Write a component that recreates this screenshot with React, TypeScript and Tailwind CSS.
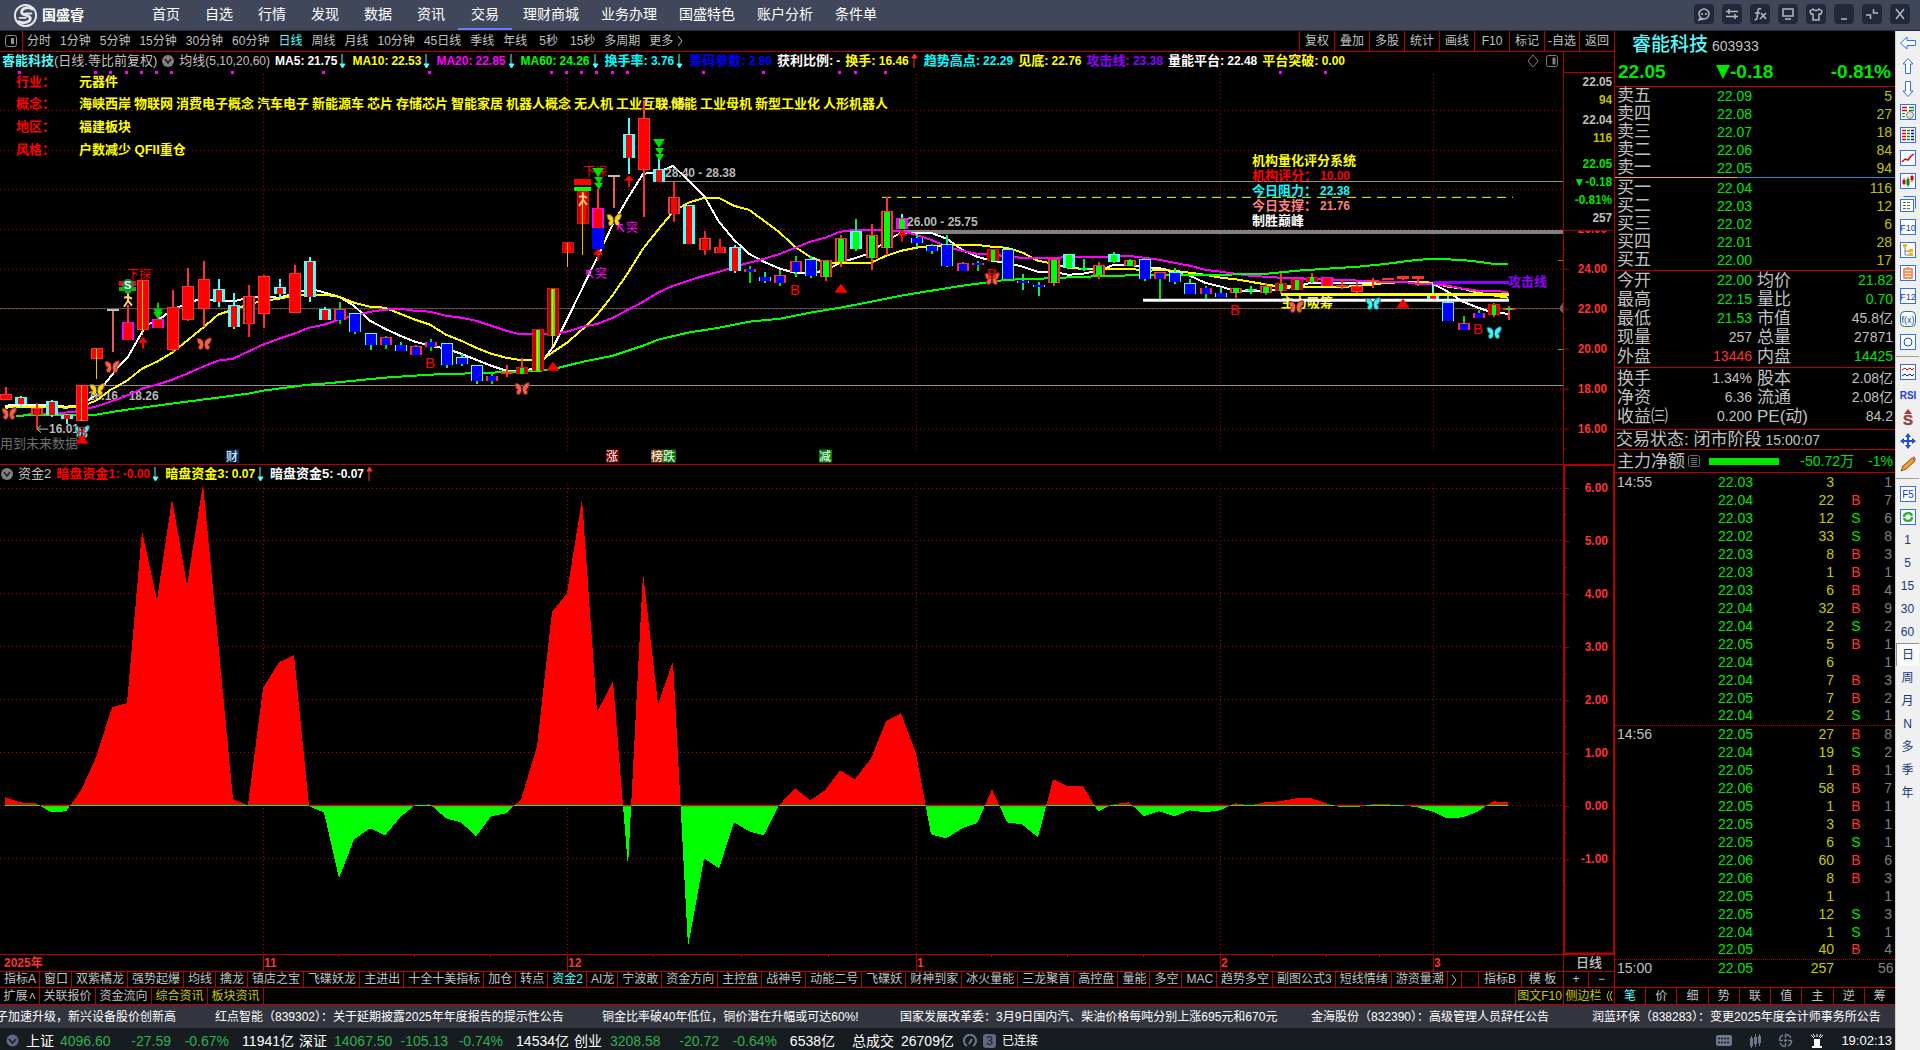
import React from "react";

const RED = "#b40000";
const BRED = "#ff3232";
const CYAN = "#54fcfc";

/* ---------- chart data ---------- */

const barX = (i: number) => Math.round(5.3 + 15.18 * i);

const months = [263, 567, 916, 1220, 1433];

type Candle = [number, number, number, number, string];
// [wickTop, wickBottom, bodyTop, bodyBottom, style]
const candles: Candle[] = [
  [387, 400, 394, 400, "R"], [396, 407, 397, 404, "C"], [403, 429, 408, 415, "H"], [400, 417, 401, 415, "C"],
  [414, 424, 415, 419, "C"], [385, 421, 385, 421, "Y"], [348, 379, 348, 359, "Y"], [309, 352, 309, 311, "T"],
  [305, 340, 322, 340, "MR"], [280, 335, 280, 330, "Y"], [318, 328, 319, 328, "MR"], [290, 352, 307, 350, "R"],
  [268, 321, 286, 320, "R"], [261, 327, 279, 309, "R"], [279, 307, 289, 302, "C"], [293, 329, 305, 327, "C"],
  [285, 337, 296, 324, "H"], [275, 328, 276, 314, "R"], [279, 298, 287, 294, "C"], [265, 313, 273, 313, "R"],
  [257, 302, 261, 297, "C"], [307, 320, 309, 320, "C"], [302, 324, 309, 320, "RB"], [313, 334, 313, 332, "CB"],
  [333, 350, 333, 345, "CB"], [336, 349, 337, 345, "RB"], [342, 351, 345, 351, "CB"], [345, 355, 346, 355, "RB"],
  [339, 351, 342, 347, "RB"], [343, 368, 343, 365, "CB"], [354, 366, 357, 364, "CB"], [365, 384, 365, 381, "CB"],
  [374, 384, 376, 381, "RB"], [365, 377, 372, 374, "R"], [358, 374, 367, 374, "DG"], [329, 371, 329, 371, "DY"],
  [288, 347, 288, 336, "DY"], [242, 267, 242, 253, "DR"], [191, 255, 191, 224, "DR"], [189, 249, 208, 228, "MR"],
  [175, 208, 175, 177, "T"], [118, 174, 134, 158, "C"], [100, 217, 118, 170, "R"], [155, 182, 169, 182, "C"],
  [182, 222, 197, 214, "H"], [205, 244, 205, 244, "C"], [231, 255, 238, 250, "H"], [239, 253, 247, 253, "H"],
  [245, 273, 247, 271, "C"], [266, 283, 269, 272, "RB"], [272, 283, 277, 281, "CB"], [270, 286, 275, 283, "RB"],
  [256, 277, 261, 272, "RB"], [256, 278, 259, 276, "CB"], [260, 281, 260, 277, "RG"], [235, 267, 238, 262, "RG"],
  [219, 251, 231, 249, "CG"], [224, 270, 235, 258, "RG"], [197, 255, 211, 248, "RG"], [214, 229, 218, 229, "MG"],
  [234, 247, 238, 243, "CB"], [244, 254, 246, 251, "CB"], [235, 267, 244, 266, "CB"], [262, 271, 263, 271, "RB"],
  [261, 271, 263, 265, "RB"], [249, 261, 249, 261, "DG"], [249, 279, 249, 279, "CB"], [274, 290, 281, 283, "CB"],
  [282, 296, 285, 287, "CB"], [259, 286, 259, 283, "RG"], [254, 269, 254, 268, "CG"], [259, 271, 268, 270, "CG"],
  [262, 279, 265, 275, "RG"], [252, 263, 254, 262, "CG"], [259, 266, 260, 266, "RG"], [259, 281, 259, 279, "CB"],
  [272, 300, 272, 279, "RB"], [268, 284, 272, 282, "CB"], [279, 294, 283, 294, "CB"], [286, 299, 288, 294, "RB"],
  [287, 297, 293, 297, "CB"], [288, 298, 288, 293, "RG"], [286, 294, 289, 291, "CG"], [283, 295, 286, 293, "RG"],
  [273, 294, 283, 291, "DG"], [279, 290, 279, 290, "DG"], [273, 283, 277, 282, "DG"], [277, 286, 277, 286, "MR"],
  [280, 289, 285, 287, "R"], [280, 293, 286, 292, "R"], [278, 288, 280, 282, "R"], [278, 280, 278, 280, "R"],
  [276, 280, 276, 279, "R"], [276, 286, 276, 279, "R"], [283, 299, 295, 299, "C"], [295, 321, 302, 321, "CB"],
  [316, 330, 323, 330, "RB"], [310, 318, 313, 318, "RB"], [303, 317, 304, 315, "DG"], [306, 320, 308, 310, "RG"],
];

type Look = { fill: string; edge: string; inner: string; w: number; wick: string };
const looks: Record<string, Look> = {
  R: { fill: "#ff0000", edge: BRED, inner: "", w: 0, wick: BRED },
  Y: { fill: "#ff0000", edge: BRED, inner: "#ffe000", w: 1, wick: "#ffc000" },
  C: { fill: CYAN, edge: CYAN, inner: "#ff0000", w: 6, wick: CYAN },
  H: { fill: "#000000", edge: BRED, inner: "#ff0000", w: 6, wick: "#ff2020" },
  RB: { fill: BRED, edge: BRED, inner: "#0000ff", w: 8, wick: "#00e000" },
  CB: { fill: CYAN, edge: CYAN, inner: "#0000ff", w: 10, wick: "#00f060" },
  RG: { fill: "#000000", edge: BRED, inner: "#00ff00", w: 6, wick: BRED },
  CG: { fill: CYAN, edge: CYAN, inner: "#00ff00", w: 6, wick: "#00f060" },
  MG: { fill: "#ff00ff", edge: "#ff00ff", inner: "#00ff00", w: 6, wick: CYAN },
  MR: { fill: "#ff00ff", edge: "#ff00ff", inner: "#ff0000", w: 8, wick: BRED },
  DR: { fill: "#c00000", edge: "#e01010", inner: "#ff0000", w: 6, wick: "#ffb000" },
  DG: { fill: "#c00000", edge: "#e01010", inner: "#00ff00", w: 4, wick: BRED },
  DY: { fill: "#b40000", edge: "#e01010", inner: "#40f000", w: 4, wick: "#ffe000" },
  T: { fill: "#ff2020", edge: "#c0c0c0", inner: "", w: 0, wick: "#e06060" },
};

const flow = [
  797, 802, 803, 812, 811, 790, 757, 707, 703, 531, 600, 499, 585, 484, 641, 799, 805, 688, 662, 655, 806, 812, 878, 839,
  828, 835, 817, 805, 804, 818, 822, 836, 816, 813, 799, 746, 612, 593, 499, 712, 681, 867, 573, 704, 661, 946, 858, 868,
  822, 831, 835, 805, 788, 800, 790, 770, 779, 758, 721, 713, 753, 834, 838, 828, 823, 789, 822, 824, 837, 779, 786, 786,
  811, 804, 802, 816, 811, 816, 810, 812, 810, 803, 805, 802, 801, 798, 798, 803, 807, 807, 804, 804, 805, 807, 811, 818,
  817, 811, 801, 802,
];

const ma5 =
  "5,406 36,405 66,407 81,406 96,395 105,384 121,364 128,357 143,331 148,325 163,317 172,310 187,304 200,299 218,301 236,301 248,298 264,297 279,298 294,294 309,289 318,291 339,297 354,306 370,321 385,329 400,336 415,342 430,346 446,349 461,354 476,360 491,366 506,371 521,372 537,368 545,358 554,346 567,320 583,287 598,256 613,224 628,198 643,174 658,172 666,169 673,166 688,180 704,196 719,222 734,240 749,254 764,262 780,269 795,273 810,273 825,271 840,263 856,258 871,253 886,241 901,233 931,233 947,239 962,250 977,257 992,261 1007,263 1023,267 1038,272 1053,272 1068,275 1083,274 1098,271 1114,265 1129,265 1144,267 1164,269 1174,273 1190,276 1205,283 1221,287 1235,291 1266,291 1281,289 1296,287 1311,283 1372,283 1387,282 1417,282 1433,284 1448,292 1463,302 1478,308 1493,313 1508,314";
const ma10 =
  "5,408 36,407 66,408 81,407 96,401 111,390 127,381 142,369 157,362 172,353 187,341 203,328 218,315 233,310 248,305 263,301 279,299 294,296 309,295 324,295 339,297 354,303 370,307 385,308 400,314 415,320 430,325 446,335 461,341 476,348 491,354 506,358 518,360 534,360 545,358 552,353 567,343 583,329 598,314 613,295 628,273 643,249 658,230 673,212 688,203 704,198 719,198 734,206 749,210 764,221 780,233 795,247 810,257 825,263 871,263 886,256 901,251 916,248 931,246 947,246 962,245 977,245 992,247 1007,248 1023,253 1038,261 1053,264 1068,268 1083,269 1129,269 1149,271 1159,270 1174,271 1190,273 1205,275 1221,278 1239,280 1256,283 1274,286 1311,287 1346,287 1372,285 1387,283 1417,282 1433,283 1448,287 1463,289 1478,293 1508,298";
const ma20 =
  "28,414 54,414 75,412 96,407 111,402 127,396 142,389 157,385 172,380 187,374 203,367 218,361 233,359 248,352 263,345 279,339 294,334 309,328 324,325 339,320 354,316 370,312 385,310 400,309 415,311 430,312 446,316 461,318 476,321 491,326 506,331 518,334 552,334 567,332 583,327 598,324 613,318 628,310 643,302 658,293 673,286 688,281 704,276 719,272 734,267 749,263 764,259 780,254 795,248 810,242 825,238 840,232 856,230 901,231 916,235 931,240 947,247 962,251 977,254 992,254 1007,257 1023,258 1053,258 1080,257 1114,257 1129,256 1144,258 1159,260 1174,263 1190,266 1205,270 1221,272 1250,276 1281,278 1311,279 1341,280 1381,282 1402,282 1417,284 1433,284 1448,286 1463,289 1478,291 1508,292";
const ma60 =
  "16,416 96,415 127,410 157,406 187,402 218,398 248,394 263,391 309,385 324,384 385,378 430,375 461,374 491,373 541,371 559,368 583,362 613,356 643,346 658,340 688,333 719,328 749,322 780,319 810,313 840,308 871,302 901,296 931,291 962,286 992,282 1007,280 1038,279 1083,277 1114,276 1159,275 1221,275 1266,274 1296,271 1326,269 1357,267 1387,264 1417,260 1440,259 1471,261 1493,264 1508,264";

const concepts: [number, string][] = [
  [79, "海峡西岸"], [134, "物联网"], [176, "消费电子概念"], [257, "汽车电子"], [312, "新能源车"], [367, "芯片"], [396, "存储芯片"],
  [451, "智能家居"], [506, "机器人概念"], [574, "无人机"], [616, "工业互联"], [671, "储能"], [700, "工业母机"], [755, "新型工业化"], [823, "人形机器人"],
];

/* ---------- chart marks ---------- */

const CJK = '"Liberation Sans","Noto Sans CJK SC",sans-serif';

function Label({ x, y, fill, size = 13, bold = true, end = false, children }: { x: number; y: number; fill: string; size?: number; bold?: boolean; end?: boolean; children: React.ReactNode }) {
  return (
    <text x={x} y={y} fill={fill} fontSize={size} fontWeight={bold ? 700 : 400} fontFamily={CJK} textAnchor={end ? "end" : "start"} dominantBaseline="central">
      {children}
    </text>
  );
}

function Butterfly({ x, y, c, d }: { x: number; y: number; c: string; d: string }) {
  return (
    <g transform={`translate(${x} ${y})`}>
      <path d="M0 0C-1-4-4-6-7-5C-7-2-6 0-4 1C-6 2-6 5-4 6C-2 6-1 4 0 2C1 4 2 6 4 6C6 5 6 2 4 1C6 0 8-3 7-6C4-6 1-4 0 0Z" fill={c} stroke={d} strokeWidth="1" />
      <path d="M0-2V4" stroke="#000" strokeWidth="1" />
    </g>
  );
}

const UpArrow = ({ x, y }: { x: number; y: number }) => (
  <path d={`M${x} ${y - 6}l5 6h-4v6h-2v-6h-4z`} fill="#ff0000" />
);
const Peak = ({ x, y }: { x: number; y: number }) => <path d={`M${x} ${y - 5}l6 8v1h-12v-1z`} fill="#ff0000" />;
const Fall = ({ x, y }: { x: number; y: number }) => (
  <path d={`M${x - 6} ${y}h12l-6 9zM${x - 4} ${y + 9}h9l-4 7zM${x - 4} ${y + 15}h9l-4 7z`} fill="#00e000" />
);
const Runner = ({ x, y }: { x: number; y: number }) => (
  <path d={`M${x} ${y - 6}v3l-4 1M${x} ${y - 3}l4 2M${x} ${y - 3}v4l-4 6M${x} ${y + 1}l4 5`} stroke="#ffd070" strokeWidth="2" fill="none" />
);

function Tag({ x, bg, t }: { x: number; bg: string; t: string }) {
  return (
    <g>
      <rect x={x} y="450" width="13" height="13" fill={bg} />
      <Label x={x} y={457} fill="#fff" size={12} bold={false}>{t}</Label>
    </g>
  );
}

function Grid({ rows, top, bottom }: { rows: number[]; top: number; bottom: number }) {
  return (
    <g stroke={RED} strokeDasharray="1 3" shapeRendering="crispEdges">
      {rows.map((y) => (
        <line key={y} x1="0" x2="1563" y1={y + 0.5} y2={y + 0.5} />
      ))}
      {months.map((x) => (
        <line key={x} x1={x + 0.5} x2={x + 0.5} y1={top} y2={bottom} />
      ))}
    </g>
  );
}

function PriceChart() {
  return (
    <svg className="block size-full" viewBox="0 70 1563 394" preserveAspectRatio="none" role="img" aria-label="日线K线图">
      <Grid rows={[110, 150, 189, 229, 269, 309, 349, 389, 429]} top={74} bottom={451} />
      <g shapeRendering="crispEdges">
        {[19, 95, 110, 126, 141, 156, 171, 232, 323, 429, 551, 566, 581, 596, 612, 627, 703, 763, 839, 855, 885, 1280, 1325].map((x) => (
          <rect key={x} x={x - 1} y="71" width="3" height="3" fill="#ff00ff" />
        ))}
        <rect x="0" y="308" width="1563" height="1" fill="#505050" />
        <rect x="81" y="385" width="1482" height="1" fill="#909090" />
        <rect x="663" y="181" width="900" height="1" fill="#909090" />
        <rect x="904" y="230" width="659" height="4" fill="#808080" />
        <line x1="882" x2="1513" y1="197.5" y2="197.5" stroke="#ffff00" strokeDasharray="9 6" />
        <path d="M1563 303v11l-4-5z" fill="#606060" />
        <rect x="1558" y="260" width="5" height="1" fill={BRED} />
        <rect x="1558" y="349" width="5" height="1" fill="#00e000" />
      </g>
      <Label x={655} y={104} fill="#b8b8b8" size={12}>32.65</Label>
      <Label x={16} y={82} fill="#ff0000">行业：</Label>
      <Label x={79} y={82} fill="#ffff00">元器件</Label>
      <Label x={16} y={104} fill="#ff0000">概念：</Label>
      {concepts.map(([x, t]) => <Label key={x} x={x} y={104} fill="#ffff00">{t}</Label>)}
      <Label x={16} y={127} fill="#ff0000">地区：</Label>
      <Label x={79} y={127} fill="#ffff00">福建板块</Label>
      <Label x={16} y={150} fill="#ff0000">风格：</Label>
      <Label x={79} y={150} fill="#ffff00">户数减少 QFII重仓</Label>
      <Label x={0} y={444} fill="#707070" bold={false}>用到未来数据</Label>
      <Label x={88} y={396} fill="#b8b8b8" size={12}>18.16 - 18.26</Label>
      <Label x={49} y={429} fill="#b8b8b8" size={12}>16.01</Label>
      <path d="M48 429.500H37M41 426L37 429.500L41 433" stroke="#c0c0c0" fill="none" />
      <path d="M654 101.500H644M647 99L644 101.500L647 104" stroke="#c0c0c0" fill="none" />
      <g fill="none" strokeWidth="2" shapeRendering="crispEdges">
        <polyline points={ma5} stroke="#ffffff" />
        <polyline points={ma10} stroke="#ffff00" />
        <polyline points={ma20} stroke="#ff00ff" />
        <polyline points={ma60} stroke="#00ff00" />
      </g>
      <g shapeRendering="crispEdges">
        {candles.map(([wt, wb, bt, bb, s], i) => {
          const k = looks[s];
          const x = barX(i);
          const h = Math.max(bb - bt, 2);
          const hollow = k.fill === "#000000";
          return (
            <g key={i}>
              <rect x={x} y={wt} width={s.includes("Y") || s === "DR" ? 1 : 2} height={wb - wt} fill={k.wick} />
              <rect x={x - 5} y={bt} width="12" height={h} fill={k.edge} />
              {h > 4 && <rect x={x - (hollow ? 3 : 4)} y={bt + 1} width={hollow ? 8 : 10} height={h - 2} fill={k.fill} />}
              {k.w > 1 && <rect x={x + 1 - k.w / 2} y={bt + (h > 6 ? 1 : 0)} width={k.w} height={h > 6 ? h - 1 : h} fill={k.inner} />}
              {(s === "Y" || s === "DY" || s === "DR") && <rect x={x} y={bt + 1} width="1" height={h - 1} fill="#ffd000" />}
            </g>
          );
        })}
        <rect x="592" y="228" width="12" height="21" fill="#0000ff" />
        <rect x="574" y="179" width="17" height="6" fill="#ff0000" />
        <rect x="574" y="187" width="17" height="4" fill="#00ff00" />
        <rect x="119" y="281" width="17" height="5" fill="#ff0000" />
        <rect x="119" y="287" width="17" height="4" fill="#00c000" />
        <rect x="1281" y="293" width="228" height="3" fill="#ffff00" />
        <rect x="1433" y="281" width="76" height="3" fill="#9000ff" />
      </g>
      <Label x={1281} y={303} fill="#ffff00">主力吸筹</Label>
      <rect x="1143" y="299" width="366" height="3" fill="#ffffff" />
      <Label x={1508} y={282} fill="#9000ff">攻击线</Label>

      <Label x={127} y={275} fill="#ff0000" size={12} bold={false}>下探</Label>
      <Label x={583} y={172} fill="#ff0000" size={12} bold={false}>下探</Label>
      <circle cx="128" cy="285" r="6" fill="#208040" />
      <Label x={124} y={285} fill="#fff" size={11}>S</Label>
      <path d="M124 291h8l-4 5z" fill="#00c000" />
      <Runner x={128} y={300} />
      <Runner x={583} y={199} />
      <Label x={665} y={173} fill="#b8b8b8" size={12}>28.40 - 28.38</Label>
      <Label x={907} y={222} fill="#b8b8b8" size={12}>26.00 - 25.75</Label>
      {[[621, 228], [590, 274]].map(([x, y]) => (
        <g key={x}>
          <path d={`M${x + 3} ${y + 4}L${x - 2} ${y - 2}M${x - 3} ${y + 2}V${y - 3}H${x + 2}`} stroke="#ff00ff" strokeWidth="1.500" fill="none" />
          <Label x={x + 5} y={y} fill="#ff00ff" size={12} bold={false}>突</Label>
        </g>
      ))}
      {[[143, 343], [598, 255], [629, 181], [902, 236]].map(([x, y]) => <UpArrow key={x} x={x} y={y} />)}
      {[[553, 367], [82, 440], [841, 289], [1403, 304]].map(([x, y]) => <Peak key={x} x={x} y={y} />)}
      <path d="M157 303h2v6h4l-2 3h2l-5 8l-5-8h2l-2-3h4z" fill="#00d000" />
      <Fall x={659} y={139} />
      <Fall x={598} y={168} />
      {[[9, 414], [112, 367], [204, 344], [522, 389], [992, 279], [1296, 307]].map(([x, y]) => <Butterfly key={x} x={x} y={y} c="#f06048" d="#802018" />)}
      {[[97, 390], [614, 220]].map(([x, y]) => <Butterfly key={x} x={x} y={y} c="#f8d020" d="#806010" />)}
      {[[82, 432], [1373, 304], [1494, 333]].map(([x, y]) => <Butterfly key={x} x={x} y={y} c="#40f0f0" d="#107080" />)}
      {[[77, 432], [425, 363], [790, 290], [987, 274], [1230, 310], [1473, 329]].map(([x, y]) => (
        <Label key={x} x={x} y={y} fill="#ff0000" size={15} bold={false}>B</Label>
      ))}
      <Label x={1252} y={161} fill="#ffff00">机构量化评分系统</Label>
      <Label x={1252} y={176} fill="#ff0000">机构评分：</Label>
      <Label x={1350} y={176} fill="#ff0000" size={12} end>10.00</Label>
      <Label x={1252} y={191} fill="#00ffff">今日阻力：</Label>
      <Label x={1350} y={191} fill="#00ffff" size={12} end>22.38</Label>
      <Label x={1252} y={206} fill="#ff8080">今日支撑：</Label>
      <Label x={1350} y={206} fill="#ff8080" size={12} end>21.76</Label>
      <Label x={1252} y={221} fill="#ffffff">制胜巅峰</Label>
      <Tag x={226} bg="#003468" t="财" />
      <Tag x={606} bg="#800000" t="涨" />
      <Tag x={651} bg="#804000" t="榜" />
      <Tag x={663} bg="#008000" t="跌" />
      <Tag x={819} bg="#008000" t="减" />
    </svg>
  );
}

function FlowChart() {
  const pts = flow.map((y, i) => `${barX(i)},${y}`).join(" ");
  const shape = `${barX(0)},805 ${pts} ${barX(99)},805`;
  return (
    <svg className="block size-full" viewBox="0 483 1563 471" preserveAspectRatio="none" role="img" aria-label="资金2">
      <defs>
        <clipPath id="above"><rect x="0" y="483" width="1563" height="323" /></clipPath>
        <clipPath id="below"><rect x="0" y="805" width="1563" height="149" /></clipPath>
      </defs>
      <Grid rows={[488, 540, 593, 646, 699, 752, 805, 858]} top={484} bottom={954} />
      <g shapeRendering="crispEdges">
        <rect x="5" y="805" width="1503" height="1" fill="#00ff00" />
        <polygon points={shape} fill="#00ff00" clipPath="url(#below)" />
        <polygon points={shape} fill="#ff0000" clipPath="url(#above)" transform="translate(0 0)" />
      </g>
    </svg>
  );
}

function PriceAxis() {
  const quote: [string, number, string][] = [
    ["22.05", 82, "#c0c0c0"], ["94", 100, "#c0c000"], ["22.04", 120, "#c0c0c0"], ["116", 138, "#c0c000"],
    ["22.05", 164, "#00e600"], ["▼-0.18", 182, "#00e600"], ["-0.81%", 200, "#00e600"], ["257", 218, "#c0c0c0"],
  ];
  return (
    <svg className="block size-full" viewBox="1563 52 52 412" preserveAspectRatio="none">
      <g fill={RED}>
        <rect x="1563" y="52" width="1" height="412" />
        {[229, 269, 309, 349, 389, 429].map((y) => <rect key={y} x="1564" y={y} width="5" height="1" />)}
        {[249, 289, 329, 369, 409, 449].map((y) => <rect key={y} x="1564" y={y} width="2" height="1" />)}
      </g>
      {[24, 22, 20, 18, 16].map((v, i) => (
        <Label key={v} x={1608} y={269 + i * 40} fill={BRED} size={12} end>{v}.00</Label>
      ))}
      <Label x={1608} y={229} fill={BRED} size={12} end>26.00</Label>
      <rect x="1564" y="72" width="50" height="159" fill="#000" />
      <rect x="1563" y="72" width="51" height="1" fill={RED} />
      <rect x="1563" y="230" width="51" height="1" fill={RED} />
      {quote.map(([t, y, c]) => <Label key={y} x={1613} y={y} fill={c} size={12} end>{t}</Label>)}
    </svg>
  );
}

function FlowAxis() {
  return (
    <svg className="block size-full" viewBox="1563 465 52 489" preserveAspectRatio="none">
      <rect x="1564" y="465" width="50" height="488" fill="none" stroke={RED} strokeWidth="2" />
      {[6, 5, 4, 3, 2, 1, 0, -1].map((v, i) => (
        <g key={v}>
          <rect x="1565" y={488 + i * 53} width="4" height="1" fill={RED} />
          <rect x="1565" y={514 + i * 53} width="2" height="1" fill={RED} />
          <Label x={1608} y={488 + i * 53} fill={BRED} size={12} end>{v}.00</Label>
        </g>
      ))}
    </svg>
  );
}

/* ---------- chrome ---------- */

const nav2 = ["首页", "自选", "行情", "发现", "数据", "资讯", "交易"];
const nav4 = ["理财商城", "业务办理", "国盛特色", "账户分析", "条件单"];

const windowIcons: [string, React.ReactNode][] = [
  ["消息", <g key="i"><circle cx="8" cy="8" r="5" /><path d="M4 12L3 14L7 13" /><path d="M6 7v2M10 7v2" /></g>],
  ["切换", <path key="i" d="M2 5.500H14M2 10.500H14M5 3V8M11 8V13" />],
  ["公式", <path key="i" d="M9 3C7 2 6 3 6 5L5 12C5 14 3 14 3 13M3 7H8M9 7L14 13M14 7L8 13" />],
  ["屏幕", <path key="i" d="M3 3H13V10H3ZM5 13H11" />],
  ["皮肤", <path key="i" d="M5 3L2 5L3 8H5V14H11V8H13L14 5L11 3C10 5 6 5 5 3Z" />],
  ["最小化", <path key="i" d="M5 13H11" />],
  ["还原", <path key="i" d="M9.500 3V7H14M2 9H6.500V13" />],
  ["关闭", <path key="i" d="M4 3L12 13M12 3L4 13" />],
];

function TitleBar() {
  return (
    <header className="flex h-[31px] shrink-0 items-stretch border-b border-[#22283a] bg-[#40475a] text-sm text-white">
      <div className="flex w-[140px] shrink-0 items-center gap-1 pl-[13px]">
        <svg width="25" height="25" viewBox="0 0 26 26" fill="none" stroke="#e4e6ea" strokeWidth="3">
          <circle cx="13" cy="13" r="11" strokeWidth="2" />
          <path d="M21 7C17 3 9 5 9 9.500C9 13.500 18 11.500 18 16C18 20 10 22 5 19" />
          <path d="M20 11H12M6 15.500H14" strokeWidth="2" />
        </svg>
        <span className="font-bold">国盛睿</span>
      </div>
      <nav className="flex">
        {nav2.map((t) => (
          <button key={t} className={t === "交易" ? "border-b-2 border-[#6080f8] px-[13px]" : "pr-[13px] pb-[2px] pl-3"}>{t}</button>
        ))}
        {nav4.map((t) => (
          <button key={t} className="px-[11px] pb-[2px]">{t}</button>
        ))}
      </nav>
      <div className="ml-auto flex items-center gap-2 pr-[10px] pb-[2px]">
        {windowIcons.map(([name, icon]) => (
          <button key={name} aria-label={name} className="flex size-5 items-center justify-center rounded-[4px] bg-[#222838]">
            <svg width="16" height="16" viewBox="0 0 16 16" fill="none" stroke="#b4b8c0" strokeWidth="1.500">{icon}</svg>
          </button>
        ))}
      </div>
    </header>
  );
}

const periods = ["分时", "1分钟", "5分钟", "15分钟", "30分钟", "60分钟", "日线", "周线", "月线", "10分钟", "45日线", "季线", "年线", "5秒", "15秒", "多周期", "更多"];
const tools = ["复权", "叠加", "多股", "统计", "画线", "F10", "标记", "-自选", "返回"];

function PeriodBar() {
  return (
    <div className="flex h-[21px] shrink-0 border-r border-b border-[#b40000] text-xs text-[#c0c0c0]">
      <button aria-label="侧栏" className="flex w-[23px] items-center justify-center border-r border-[#b40000]">
        <svg width="12" height="12" viewBox="0 0 12 12"><rect x=".5" y=".5" width="11" height="11" rx="2" fill="none" stroke="#909090" /><rect x="6" y="3" width="3" height="6" fill="#909090" /></svg>
      </button>
      <div className="flex items-center gap-[9px] pl-1">
        {periods.map((t) => (
          <button key={t} className={t === "日线" ? "text-[#54fcfc]" : /^\d+秒$/.test(t) ? "pl-[3px]" : ""}>{t}</button>
        ))}
        <svg width="5" height="10" viewBox="0 0 5 10" fill="none" stroke="#c0c0c0" className="-ml-1"><path d="M0 0L4 5L0 10" /></svg>
      </div>
      <div className="ml-auto flex">
        {tools.map((t) => (
          <button key={t} className="w-[35px] border-l border-[#b40000] whitespace-nowrap">{t}</button>
        ))}
      </div>
    </div>
  );
}

function Trend({ up }: { up?: boolean }) {
  return (
    <svg width="7" height="14" viewBox="0 0 7 14" className="shrink-0">
      {up ? <path d="M3 14V1M1 4L3.500 0L6 4Z" stroke={BRED} fill={BRED} /> : <path d="M3 0V13M1 10L3.500 14L6 10Z" stroke={CYAN} fill={CYAN} />}
    </svg>
  );
}

function Chevron() {
  return (
    <svg width="12" height="12" viewBox="0 0 12 12" className="shrink-0"><circle cx="6" cy="6" r="6" fill="#808080" /><path d="M3 4L6 8L9 4" stroke="#222" strokeWidth="1.500" fill="none" /></svg>
  );
}

type Stat = [string, string, string, ("up" | "down" | "")];
function Stats({ items }: { items: Stat[] }) {
  return (
    <>
      {items.map(([name, value, color, dir]) => (
        <span key={name} className={`flex items-center whitespace-nowrap font-bold ${color}`}>
          <span className={/^[A-Z]/.test(name) ? "text-xs" : "text-[13px]"}>{name}:</span>
          <span className="ml-[3px] text-xs">{value}</span>
          {dir && <span className="ml-[2px] pr-px"><Trend up={dir === "up"} /></span>}
        </span>
      ))}
    </>
  );
}

const priceStats: Stat[] = [
  ["MA5", "21.75", "text-white", "down"], ["MA10", "22.53", "text-[#ffff00]", "down"], ["MA20", "22.85", "text-[#ff00ff]", "down"],
  ["MA60", "24.26", "text-[#00ff00]", "down"], ["换手率", "3.76", "text-[#00ffff]", "down"], ["筹码参数", "2.80", "text-[#0000ff]", ""],
  ["获利比例", "-", "text-white", ""], ["换手", "16.46", "text-[#ffff00]", "up"], ["趋势高点", "22.29", "text-[#00ffff]", ""],
  ["见底", "22.76", "text-[#ffff00]", ""], ["攻击线", "23.38", "text-[#9000ff]", ""], ["量能平台", "22.48", "text-white", ""],
  ["平台突破", "0.00", "text-[#ffff00]", ""],
];
const flowStats: Stat[] = [
  ["暗盘资金1", "-0.00", "text-[#ff0000]", "down"], ["暗盘资金3", "0.07", "text-[#ffff00]", "down"], ["暗盘资金5", "-0.07", "text-white", "up"],
];

const tabs = ["指标A", "窗口", "双紫橘龙", "强势起爆", "均线", "擒龙", "镇店之宝", "飞碟妖龙", "主进出", "十全十美指标", "加仓", "转点", "资金2", "AI龙", "宁波敢", "资金方向", "主控盘", "战神号", "动能二号", "飞碟妖", "财神到家", "冰火量能", "三龙聚首", "高控盘", "量能", "多空", "MAC", "趋势多空", "副图公式3", "短线情绪", "游资量潮"];

function MainColumn() {
  return (
    <main className="flex min-w-0 flex-1 flex-col">
      <PeriodBar />
      <section className="flex min-h-0 flex-[412_1_0px]">
        <div className="flex min-w-0 flex-1 flex-col">
          <div className="flex h-[18px] shrink-0 items-center gap-[5px] overflow-hidden pl-[2px]">
            <span className="flex items-center text-[13px] whitespace-nowrap text-[#c0c0c0]"><b className="text-[#54fcfc]">睿能科技</b>(日线.等比前复权)</span>
            <Chevron />
            <span className="flex items-center text-[13px] whitespace-nowrap text-[#c0c0c0]">均线<span className="text-xs">(5,10,20,60)</span></span>
            <Stats items={priceStats} />
            <svg className="mr-1 ml-auto shrink-0" width="32" height="14" viewBox="0 0 32 14" fill="none" stroke="#808080"><path d="M6 1L11 7L6 13L1 7Z" /><rect x="19.500" y="1.500" width="11" height="11" rx="2" /><rect x="26" y="4" width="2" height="6" fill="#808080" /></svg>
          </div>
          <div className="min-h-0 flex-1"><PriceChart /></div>
        </div>
        <div className="w-[52px] shrink-0 border-r border-[#b40000]"><PriceAxis /></div>
      </section>
      <section className="flex min-h-0 flex-[490_1_0px] border-t border-[#b40000]">
        <div className="flex min-w-0 flex-1 flex-col">
          <div className="flex h-[18px] shrink-0 items-center gap-[5px] pl-px">
            <Chevron />
            <span className="text-[13px] text-[#c0c0c0]">资金2</span>
            <Stats items={flowStats} />
          </div>
          <div className="min-h-0 flex-1"><FlowChart /></div>
        </div>
        <div className="w-[52px] shrink-0"><FlowAxis /></div>
      </section>
      <div className="flex h-[17px] shrink-0 border-t border-[#b40000]">
        <div className="min-w-0 flex-1">
          <svg className="block size-full" viewBox="0 955 1563 16" preserveAspectRatio="none">
            <g fill={RED}>
              {months.map((x) => <rect key={x} x={x} y="955" width="1" height="16" />)}
              {[338, 414, 490, 653, 741, 828, 991, 1067, 1143, 1272, 1326, 1379].map((x) => <rect key={x} x={x} y="955" width="1" height="2" />)}
            </g>
            <Label x={4} y={963} fill={BRED} size={12}>2025年</Label>
            {["11", "12", "1", "2", "3"].map((t, i) => <Label key={t} x={months[i] + 1} y={963} fill={BRED} size={12}>{t}</Label>)}
          </svg>
        </div>
        <button className="w-[52px] shrink-0 border-x border-[#b40000] text-[13px] leading-4 font-medium text-[#c0c0c0]">日线</button>
      </div>
      <div className="flex h-[17px] shrink-0 border-y border-[#b40000] text-xs leading-[15px] text-[#c0c0c0]">
        <div className="flex min-w-0 flex-1 overflow-hidden">
          {tabs.map((t) => (
            <button key={t} className={t === "资金2" ? "shrink-0 border-r border-[#b40000] pr-[3px] pl-1 text-[#54fcfc]" : "shrink-0 border-r border-[#b40000] pr-[3px] pl-1"}>{t}</button>
          ))}
          <button aria-label="更多指标" className="flex w-[14px] shrink-0 items-center justify-center border-r border-[#b40000]">
            <svg width="6" height="10" viewBox="0 0 6 10" fill="none" stroke="#c0c0c0"><path d="M1 0L5 5L1 10" /></svg>
          </button>
        </div>
        <button className="w-[43px] shrink-0 border-l border-[#b40000]">指标B</button>
        <button className="w-[42px] shrink-0 border-l border-[#b40000]">模 板</button>
        <button className="w-[25px] shrink-0 border-l border-[#b40000]">+</button>
        <button className="w-[27px] shrink-0 border-x border-[#b40000]">−</button>
      </div>
      <div className="flex h-[17px] shrink-0 border-b border-[#b40000] text-xs leading-4 text-[#c0c0c0]">
        <button className="flex w-10 items-center justify-center gap-px border-r border-[#b40000]">扩展
          <svg width="7" height="8" viewBox="0 0 7 8" fill="none" stroke="#c0c0c0"><path d="M1 7L3.500 1L6 7" /></svg>
        </button>
        {["关联报价", "资金流向"].map((t) => <button key={t} className="w-14 border-r border-[#b40000]">{t}</button>)}
        {["综合资讯", "板块资讯"].map((t) => <button key={t} className="w-14 border-r border-[#b40000] text-[#c8c800]">{t}</button>)}
        <button className="ml-auto w-12 border-l border-[#b40000] whitespace-nowrap text-[#c8c800]">图文F10</button>
        <button className="flex w-[52px] items-center justify-center gap-1 border-x border-[#b40000] whitespace-nowrap text-[#c8c800]">侧边栏
          <svg width="7" height="10" viewBox="0 0 7 10" fill="none" stroke="#c8c800"><path d="M3 0L1 5L3 10M6 0L4 5L6 10" /></svg>
        </button>
      </div>
    </main>
  );
}

/* ---------- quote panel ---------- */

const asks = [["卖五", "22.09", "5"], ["卖四", "22.08", "27"], ["卖三", "22.07", "18"], ["卖二", "22.06", "84"], ["卖一", "22.05", "94"]];
const bids = [["买一", "22.04", "116"], ["买二", "22.03", "12"], ["买三", "22.02", "6"], ["买四", "22.01", "28"], ["买五", "22.00", "17"]];
const G = "text-[#00e600]";
const S = "text-[#c0c0c0]";
const quoteA = [
  ["今开", "22.00", G, "均价", "21.82", G], ["最高", "22.15", G, "量比", "0.70", G], ["最低", "21.53", G, "市值", "45.8亿", S],
  ["现量", "257", S, "总量", "27871", S], ["外盘", "13446", "text-[#ff3232]", "内盘", "14425", G],
];
const quoteB = [["换手", "1.34%", S, "股本", "2.08亿", S], ["净资", "6.36", S, "流通", "2.08亿", S], ["收益㈢", "0.200", S, "PE(动)", "84.2", S]];
const ticks = `14:55 22.03 3 - 1
. 22.04 22 B 7
. 22.03 12 S 6
. 22.02 33 S 8
. 22.03 8 B 3
. 22.03 1 B 1
. 22.03 6 B 4
. 22.04 32 B 9
. 22.04 2 S 2
. 22.05 5 B 1
. 22.04 6 - 1
. 22.04 7 B 3
. 22.05 7 B 2
. 22.04 2 S 1
14:56 22.05 27 B 8
. 22.04 19 S 2
. 22.05 1 B 1
. 22.06 58 B 7
. 22.05 1 B 1
. 22.05 3 B 1
. 22.05 6 S 1
. 22.06 60 B 6
. 22.06 8 B 3
. 22.05 1 - 1
. 22.05 12 S 3
. 22.04 1 S 1
. 22.05 40 B 4
15:00 22.05 257 - 56`.split("\n").map((l) => l.split(" "));

function Depth({ rows }: { rows: string[][] }) {
  return (
    <table className="w-full table-fixed text-sm">
      <tbody>
        {rows.map(([n, p, q]) => (
          <tr key={n} className="h-[18px] leading-[18px]">
            <th scope="row" className="w-[72px] p-0 pl-[2px] text-left text-[17px] leading-[18px] font-normal text-[#c0c0c0]">{n}</th>
            <td className="w-[65px] p-0 text-right text-[#00e600]">{p}</td>
            <td className="p-0 pr-[3px] text-right text-[#c0c000]">{q}</td>
          </tr>
        ))}
      </tbody>
    </table>
  );
}

function Facts({ rows }: { rows: string[][] }) {
  return (
    <table className="w-full table-fixed text-sm">
      <tbody>
        {rows.map(([a, b, bc, c, d, dc]) => (
          <tr key={a} className="h-[19px] leading-[19px] whitespace-nowrap">
            <th scope="row" className="w-[72px] p-0 pl-[2px] text-left text-[17px] leading-[19px] font-normal text-[#c0c0c0]">{a}</th>
            <td className={`w-[65px] p-0 text-right ${bc}`}>{b}</td>
            <th scope="row" className="w-[55px] p-0 pl-[5px] text-left text-[17px] leading-[19px] font-normal text-[#c0c0c0]">{c}</th>
            <td className={`p-0 pr-[2px] text-right ${dc}`}>{d}</td>
          </tr>
        ))}
      </tbody>
    </table>
  );
}

function QuotePanel() {
  return (
    <aside className="flex w-[280px] shrink-0 flex-col overflow-hidden text-sm text-[#c0c0c0]">
      <div className="h-[56px] shrink-0 border-b border-[#b40000]">
        <div className="flex h-[27px] items-center gap-1 pl-[17px]">
          <h1 className="text-[19px] leading-[26px] font-medium text-[#54fcfc]">睿能科技</h1>
          <span className="pt-[2px] text-sm">603933</span>
        </div>
        <div className="flex h-[28px] items-center pr-1 pl-[3px] text-[19px] leading-7 font-bold text-[#00e600]">
          <span className="w-[98px]">22.05</span>
          <span className="flex items-center"><svg width="14" height="14" viewBox="0 0 14 14"><path d="M0 0H14L7 14Z" fill="#00e600" /></svg>-0.18</span>
          <span className="ml-auto">-0.81%</span>
        </div>
      </div>
      <Depth rows={asks} />
      <div className="flex h-px shrink-0"><div className="w-[122px] bg-[#e8b040]" /><div className="flex-1 bg-[#4080c0]" /></div>
      <div className="border-b border-[#b40000] pt-px pb-px"><Depth rows={bids} /></div>
      <div className="border-b border-[#b40000] pb-px"><Facts rows={quoteA} /></div>
      <div className="border-b border-[#b40000] pt-px pb-[3px]"><Facts rows={quoteB} /></div>
      <div className="flex h-5 shrink-0 items-center gap-1 border-b border-[#b40000] pl-px whitespace-nowrap">
        <span className="text-[17px] leading-[19px]">交易状态: 闭市阶段</span><span>15:00:07</span>
      </div>
      <div className="flex h-[23px] shrink-0 items-center border-b border-[#b40000] pr-[2px] pl-[2px] whitespace-nowrap">
        <span className="text-[17px] leading-[19px]">主力净额</span>
        <svg className="ml-[3px]" width="12" height="12" viewBox="0 0 12 12" fill="none" stroke="#707070"><rect x=".5" y=".5" width="11" height="11" rx="2" /><path d="M3 3.500H9M3 5.500H9M3 7.500H9M3 9.500H9" /></svg>
        <span className="ml-[9px] h-[7px] w-[70px] bg-[#00e600]" />
        <span className="ml-auto text-[#00e600]">-50.72万</span>
        <span className="w-[39px] text-right text-[#00e600]">-1%</span>
      </div>
      <table className="w-full table-fixed text-sm">
        <colgroup>
          <col className="w-[72px]" />
          <col className="w-[66px]" />
          <col className="w-[81px]" />
          <col className="w-[44px]" />
          <col />
        </colgroup>
        <tbody>
          {ticks.map(([t, p, v, d, n], i) => (
            <tr key={i} className={i && t !== "." ? "h-[18px] border-t border-dotted border-[#b40000] leading-[17px]" : "h-[18px] leading-[17px]"}>
              <td className="p-0 pl-[2px]">{t === "." ? "" : t}</td>
              <td className="p-0 text-right text-[#00e600]">{p}</td>
              <td className="p-0 text-right text-[#c8c800]">{v}</td>
              <td className={d === "B" ? "p-0 text-center text-[#ff3232]" : "p-0 text-center text-[#00e600]"}>{d === "-" ? "" : d}</td>
              <td className="p-0 pr-[3px] text-right text-[#808080]">{n}</td>
            </tr>
          ))}
        </tbody>
      </table>
      <nav className="mt-auto flex h-[18px] shrink-0 border-y border-[#b40000] text-xs leading-4">
        {"笔价细势联值主逆筹".split("").map((t, i) => (
          <button key={t} className={i === 0 ? "flex-1 text-[#54fcfc]" : "flex-1 border-l border-[#b40000]"}>{t}</button>
        ))}
      </nav>
    </aside>
  );
}

/* ---------- right icon rail ---------- */

const B = "#3070f0";
const frame = <rect x="1.500" y="1.500" width="15" height="15" fill="#fff" stroke={B} />;
const T = ({ s, children, c = "#1040c0" }: { s: number; children: string; c?: string }) => (
  <text x="9" y="13" fontSize={s} textAnchor="middle" fill={c} fontFamily="Liberation Sans, sans-serif">{children}</text>
);
const railTop: [string, React.ReactNode][] = [
  ["后退", <path key="a" d="M1.500 9L8 3V6.500H16.500V11.500H8V15Z" fill="#fff" stroke={B} />],
  ["上", <path key="a" d="M9 1.500L14 7H11.500V16.500H6.500V7H4Z" fill="#fff" stroke={B} />],
  ["下", <path key="a" d="M9 16.500L14 11H11.500V1.500H6.500V11H4Z" fill="#fff" stroke={B} />],
  ["自选报价", <g key="a">{frame}<path d="M3 4.500H8M3 7.500H8" stroke="#e00000" strokeWidth="1.500" /><path d="M10 4.500H15M10 7.500H15" stroke="#009000" strokeWidth="1.500" /><circle cx="11" cy="12" r="3.500" fill="#ddd" stroke="#808080" /><path d="M3 10.500H6M3 13.500H6" stroke="#009000" /></g>],
  ["报价", <g key="a">{frame}<path d="M3 4.500H7M3 7.500H7M3 10.500H7M3 13.500H7" stroke="#e00000" strokeWidth="1.500" /><path d="M8 4.500H11M8 7.500H11M8 10.500H11M8 13.500H11" stroke="#009000" strokeWidth="1.500" /><path d="M12 4.500H15M12 7.500H15M12 10.500H15M12 13.500H15" stroke="#0000d0" strokeWidth="1.500" /></g>],
  ["分时图", <g key="a">{frame}<path d="M3 13L6 10L9 11L12 7L15 5" fill="none" stroke="#e00000" strokeWidth="1.500" /></g>],
  ["K线图", <g key="a">{frame}<path d="M5 6V13M13 3V10" stroke="#e00000" /><path d="M9 5V15" stroke="#009000" /><rect x="3.500" y="8" width="3" height="4" fill="#e00000" /><rect x="7.500" y="7" width="3" height="6" fill="#009000" /><rect x="11.500" y="4" width="3" height="4" fill="#e00000" /></g>],
  ["公告", <g key="a"><path d="M4.500 1.500H16.500V13.500" fill="none" stroke={B} /><rect x="1.500" y="4.500" width="13" height="12" fill="#fff" stroke={B} /><path d="M4 7.500H12M4 10.500H12M4 13.500H12" stroke="#606060" strokeDasharray="3 1" /></g>],
  ["F10", <g key="a">{frame}<T s={9}>F10</T></g>],
  ["板块", <g key="a">{frame}<path d="M6 6V14H10M6 10H10" stroke="#808080" fill="none" /><path d="M4 3H8V6H4ZM10 8H14V11H10ZM10 12H14V15H10Z" fill="#ffb000" /></g>],
  ["自选", <g key="a">{frame}<path d="M5 5H13V14H5ZM9 3V5M6 8H12M6 11H12" stroke="#ff7020" strokeWidth="1.500" fill="none" /></g>],
  ["F12", <g key="a">{frame}<T s={9}>F12</T></g>],
  ["公式", <g key="a"><rect x="1.500" y="1.500" width="15" height="15" rx="4" fill="#fff" stroke="#108080" /><T s={9}>f(x)</T></g>],
  ["圆", <g key="a">{frame}<circle cx="9" cy="9" r="4" fill="none" stroke="#1050c0" /></g>],
];
const railMid: [string, React.ReactNode][] = [
  ["指标", <g key="a">{frame}<path d="M3 7L6 5L8 7L11 5L13 7L15 5" fill="none" stroke="#e00000" /><path d="M3 13L6 11L8 13L11 11L13 13L15 11" fill="none" stroke="#0000d0" /></g>],
  ["RSI", <text key="a" x="9" y="13" fontSize="10" fontWeight="700" textAnchor="middle" fill="#2040d0" fontFamily="Liberation Sans, sans-serif">RSI</text>],
  ["交易", <g key="a"><path d="M5 5L9 0L13 5" fill="#c03030" /><text x="9" y="16" fontSize="15" fontWeight="700" textAnchor="middle" fill="#c03030" stroke="#606060" strokeWidth=".5" fontFamily="Liberation Sans, sans-serif">S</text></g>],
  ["移动", <path key="a" d="M9 1L12 5H10V8H13V6L17 9L13 12V10H10V13H12L9 17L6 13H8V10H5V12L1 9L5 6V8H8V5H6Z" fill="#2050d0" />],
  ["画笔", <g key="a"><path d="M2 16L4 11L13 3L16 6L7 14Z" fill="#f0a030" stroke="#805020" /><path d="M13 3L15 1L17 4L16 6Z" fill="#e06060" /></g>],
];
const railLow: [string, React.ReactNode][] = [
  ["F5", <g key="a">{frame}<T s={10}>F5</T></g>],
  ["刷新", <g key="a">{frame}<path d="M5 9C5 4 12 4 13 8M13 9C13 14 6 14 5 10" fill="none" stroke="#30b030" strokeWidth="2.500" /></g>],
];

function RailGroup({ items }: { items: [string, React.ReactNode][] }) {
  return (
    <>
      {items.map(([name, icon]) => (
        <button key={name} aria-label={name} className="flex h-[23px] w-full items-center justify-center">
          <svg width="18" height="18" viewBox="0 0 18 18">{icon}</svg>
        </button>
      ))}
    </>
  );
}

function Rail() {
  return (
    <aside className="flex w-[25px] shrink-0 flex-col items-center overflow-hidden border-l border-[#d0d0d0] bg-[#f0f0f0] pr-px text-xs text-[#183880]">
      <RailGroup items={railTop} />
      <div className="my-[3px] h-px w-full shrink-0 bg-[#a0a0a0]" />
      <RailGroup items={railMid} />
      <div className="my-[3px] h-px w-full shrink-0 bg-[#a0a0a0]" />
      <RailGroup items={railLow} />
      {["1", "5", "15", "30", "60", "日", "周", "月", "N", "多", "季", "年"].map((t) => (
        <button key={t} className={t === "日" ? "h-[23px] w-full shrink-0 border-t border-l border-[#909090] bg-[#fafafa]" : "h-[23px] w-full shrink-0"}>{t}</button>
      ))}
    </aside>
  );
}

/* ---------- footer ---------- */

const news = [
  "子加速升级，新兴设备股价创新高",
  "红点智能（839302）：关于延期披露2025年年度报告的提示性公告",
  "铜金比率破40年低位，铜价潜在升幅或可达60%!",
  "国家发展改革委：3月9日国内汽、柴油价格每吨分别上涨695元和670元",
  "金海股份（832390）：高级管理人员辞任公告",
  "润蓝环保（838283）：变更2025年度会计师事务所公告",
];

function Footer() {
  const up = "text-[#30b050]";
  return (
    <footer className="shrink-0 text-white">
      <div className="flex h-[23px] overflow-hidden bg-[#33353e] text-xs leading-6 whitespace-nowrap">
        <div className="-ml-1 flex w-0 flex-1">
          {news.map((t, i) => (
            <a key={t} href="#news" className={["w-[219px] shrink-0", "w-[387px] shrink-0", "w-[298px] shrink-0", "w-[411px] shrink-0", "w-[281px] shrink-0", "shrink-0"][i]}>{t}</a>
          ))}
        </div>
      </div>
      <div className="flex h-[22px] items-center bg-[#171c20] pt-[3px] pl-[6px] text-sm leading-[18px] whitespace-nowrap">
        <svg width="13" height="13" viewBox="0 0 13 13"><circle cx="6.500" cy="6.500" r="6" fill="#606880" /><path d="M3 5L6.500 9L10 5" stroke="#171c20" strokeWidth="1.500" fill="none" /></svg>
        <span className="ml-[7px] w-[34px]">上证</span>
        <span className={`w-[53px] ${up}`}>4096.60</span><span className={`w-[58px] text-right ${up}`}>-27.59</span><span className={`w-[58px] text-right ${up}`}>-0.67%</span>
        <span className="w-[65px] text-right">11941亿</span>
        <span className="ml-[5px] w-[35px]">深证</span>
        <span className={`w-[59px] ${up}`}>14067.50</span><span className={`w-[55px] text-right ${up}`}>-105.13</span><span className={`w-[55px] text-right ${up}`}>-0.74%</span>
        <span className="w-[66px] text-right">14534亿</span>
        <span className="ml-[5px] w-[36px]">创业</span>
        <span className={`w-[51px] ${up}`}>3208.58</span><span className={`w-[58px] text-right ${up}`}>-20.72</span><span className={`w-[58px] text-right ${up}`}>-0.64%</span>
        <span className="w-[58px] text-right">6538亿</span>
        <span className="ml-[17px] w-[49px]">总成交</span>
        <span className="w-[62px]">26709亿</span>
        <svg width="14" height="14" viewBox="0 0 14 14" fill="none" stroke="#707890" strokeWidth="2"><path d="M4 12A6 6 0 1 1 10 12M6 10L9 5" /></svg>
        <span className="mx-[6px] w-[13px] rounded-[3px] bg-[#606880] text-center text-xs leading-[14px] text-[#171c20]">3</span>
        <span className="text-xs">已连接</span>
        <div className="ml-auto flex items-center gap-[17px] pr-[3px]">
          <svg width="16" height="11" viewBox="0 0 16 11"><rect width="16" height="11" rx="2" fill="#707890" /><path d="M2 3.500H14M2 7.500H14" stroke="#171c20" strokeDasharray="2 1" strokeWidth="1.500" /></svg>
          <svg width="12" height="14" viewBox="0 0 12 14" fill="#707890"><path d="M1 4H4V12H1ZM5 3H8V10H5ZM9 2H12V9H9ZM2 2H3V14H2ZM6 0H7V13H6ZM10 0H11V12H10Z" /></svg>
          <svg width="15" height="15" viewBox="0 0 15 15" fill="none" stroke="#707890" strokeWidth="1.500"><circle cx="7.500" cy="7.500" r="6" strokeDasharray="7 2" /><path d="M7.500 2V13M2 7.500H13" strokeDasharray="3 1" /></svg>
          <svg width="14" height="14" viewBox="0 0 14 14" fill="#fff"><path d="M4 5H10V12H12V14H2V12H4ZM6.500 0H7.500V3H6.500Z" /><path d="M1 1L4 4M13 1L10 4M3 0L5 3M11 0L9 3" stroke="#fff" /></svg>
          <time className="text-[13px]">19:02:13</time>
        </div>
      </div>
    </footer>
  );
}

export default function App() {
  return (
    <div className="flex h-screen min-h-[1050px] flex-col overflow-hidden bg-black font-['Liberation_Sans','Noto_Sans_CJK_SC',sans-serif]">
      <TitleBar />
      <div className="flex min-h-0 flex-1">
        <div className="flex min-w-0 flex-1 flex-col">
          <div className="flex min-h-0 flex-1">
            <MainColumn />
            <QuotePanel />
          </div>
          <Footer />
        </div>
        <Rail />
      </div>
    </div>
  );
}
